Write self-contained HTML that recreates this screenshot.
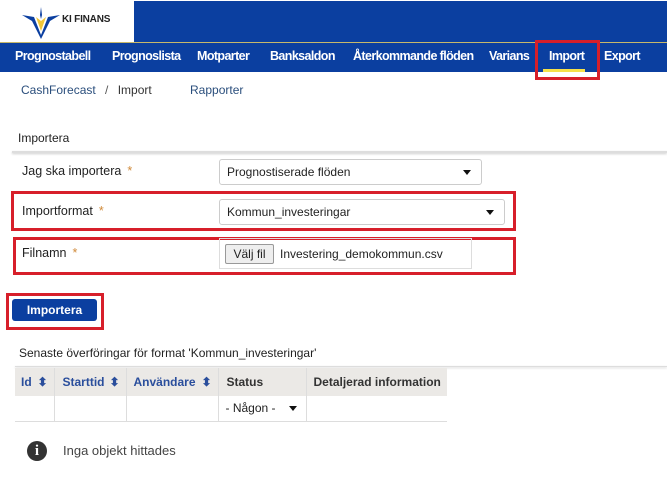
<!DOCTYPE html>
<html><head><meta charset="utf-8"><style>
*{box-sizing:border-box}
body{margin:0;width:667px;height:480px;overflow:hidden;background:#fff;font-family:"Liberation Sans",sans-serif;font-size:12px;color:#222;position:relative}
.a{position:absolute}
.nav span{position:absolute;top:49px;color:#fff;font-size:12.5px;font-weight:bold;letter-spacing:-0.6px}
.red{position:absolute;border:3px solid #d71f2a}
.sel{position:absolute;border:1px solid #ccc;border-radius:3px;background:#fff;padding-left:7px;line-height:24px;font-size:12px}
.sel:after{content:"";position:absolute;right:10px;top:10px;border-left:4px solid transparent;border-right:4px solid transparent;border-top:5px solid #111}
.lab{position:absolute;left:22px;font-size:12.5px}
.lab b{color:#d08a3a;font-weight:normal;margin-left:6px}
th,td{padding:0;border-right:1px solid #ddd}
th i{font-style:normal;position:absolute;right:6px;color:#2a4e9c}
th{position:relative}
</style></head><body>
<div class="a" style="left:0;top:0;width:134px;height:42px;background:#fff"></div>
<div class="a" style="left:134px;top:1px;width:533px;height:41px;background:#0b3fa0"></div>
<svg class="a" style="left:20px;top:5px" width="42" height="34" viewBox="0 0 42 34">
<path d="M2 10 L14 12 L21 30 L28 12 L40 10 L30 16 L21 34 L12 16Z" fill="#0b3fa0"/>
<path d="M16 12 L21 26 L26 12 L21 16Z" fill="#f0c73a"/>
<path d="M21 2 L22 10 L21 14 L20 10Z" fill="#0b3fa0"/>
</svg>
<div class="a" style="left:62px;top:14px;font-size:10px;font-weight:bold;color:#222;letter-spacing:-0.2px">KI FINANS</div>
<div class="a" style="left:0;top:42px;width:667px;height:30px;background:#0b3fa0;border-top:1px solid #c7b86a"></div>
<div class="nav">
<span style="left:15px">Prognostabell</span>
<span style="left:112px">Prognoslista</span>
<span style="left:197px">Motparter</span>
<span style="left:270px">Banksaldon</span>
<span style="left:353px">Återkommande flöden</span>
<span style="left:489px">Varians</span>
<span style="left:549px">Import</span>
<span style="left:604px">Export</span>
</div>
<div class="a" style="left:543px;top:69px;width:42px;height:3px;background:#f5e04a"></div>
<div class="red" style="left:535px;top:40px;width:65px;height:40px"></div>
<div class="a" style="left:21px;top:83px;color:#2a4e7c">CashForecast <span style="color:#555;margin:0 6px">/</span> <span style="color:#333">Import</span></div>
<div class="a" style="left:190px;top:83px;color:#2a4e7c">Rapporter</div>
<div class="a" style="left:18px;top:131px;font-size:12px">Importera</div>
<div class="a" style="left:12px;top:151px;width:655px;height:2px;background:#ddd;box-shadow:0 1px 2px #ccc"></div>
<div class="lab" style="top:164px">Jag ska importera<b>*</b></div>
<div class="sel" style="left:219px;top:159px;width:263px;height:26px">Prognostiserade flöden</div>
<div class="red" style="left:11px;top:191px;width:505px;height:40px"></div>
<div class="lab" style="top:204px">Importformat<b>*</b></div>
<div class="sel" style="left:219px;top:199px;width:286px;height:26px">Kommun_investeringar</div>
<div class="red" style="left:13px;top:237px;width:503px;height:38px"></div>
<div class="lab" style="top:246px">Filnamn<b>*</b></div>
<div class="a" style="left:219px;top:238px;width:253px;height:31px;border:1px solid #ddd"></div>
<div class="a" style="left:225px;top:244px;width:49px;height:20px;border:1px solid #999;background:#eee;border-radius:2px;text-align:center;line-height:18px">Välj fil</div>
<div class="a" style="left:280px;top:247px">Investering_demokommun.csv</div>
<div class="red" style="left:6px;top:293px;width:98px;height:37px"></div>
<div class="a" style="left:12px;top:299px;width:85px;height:22px;background:#0b3fa0;border-radius:3px;color:#fff;font-weight:bold;text-align:center;line-height:22px">Importera</div>
<div class="a" style="left:19px;top:346px;font-size:12px">Senaste överföringar för format 'Kommun_investeringar'</div>
<div class="a" style="left:15px;top:366px;width:652px;height:1px;background:#ddd;box-shadow:0 1px 2px #ccc"></div>
<table class="a" style="left:15px;top:368px;border-collapse:collapse;font-size:12px;width:432px">
<tr style="background:#ebe9e6;height:28px;font-weight:bold;text-align:left">
<th style="width:39px;color:#2a4e9c;padding-left:6px">Id<i>⬍</i></th>
<th style="width:72px;color:#2a4e9c;padding-left:8px">Starttid<i>⬍</i></th>
<th style="width:92px;color:#2a4e9c;padding-left:7px">Användare<i>⬍</i></th>
<th style="width:88px;padding-left:8px;color:#333">Status</th>
<th style="padding-left:7px;color:#333;border-right:0">Detaljerad information</th></tr>
<tr style="height:25px;border-bottom:1px solid #ddd"><td></td><td></td><td></td><td style="padding-left:7px;position:relative">- Någon -<span style="position:absolute;right:9px;top:10px;border-left:4px solid transparent;border-right:4px solid transparent;border-top:5px solid #111"></span></td><td style="border-right:0"></td></tr>
</table>
<div class="a" style="left:27px;top:441px;width:20px;height:20px;border-radius:50%;background:#333;color:#fff;font-weight:bold;font-family:'Liberation Serif',serif;text-align:center;line-height:20px;font-size:15px">i</div>
<div class="a" style="left:63px;top:443px;font-size:13px;color:#444">Inga objekt hittades</div>
</body></html>
